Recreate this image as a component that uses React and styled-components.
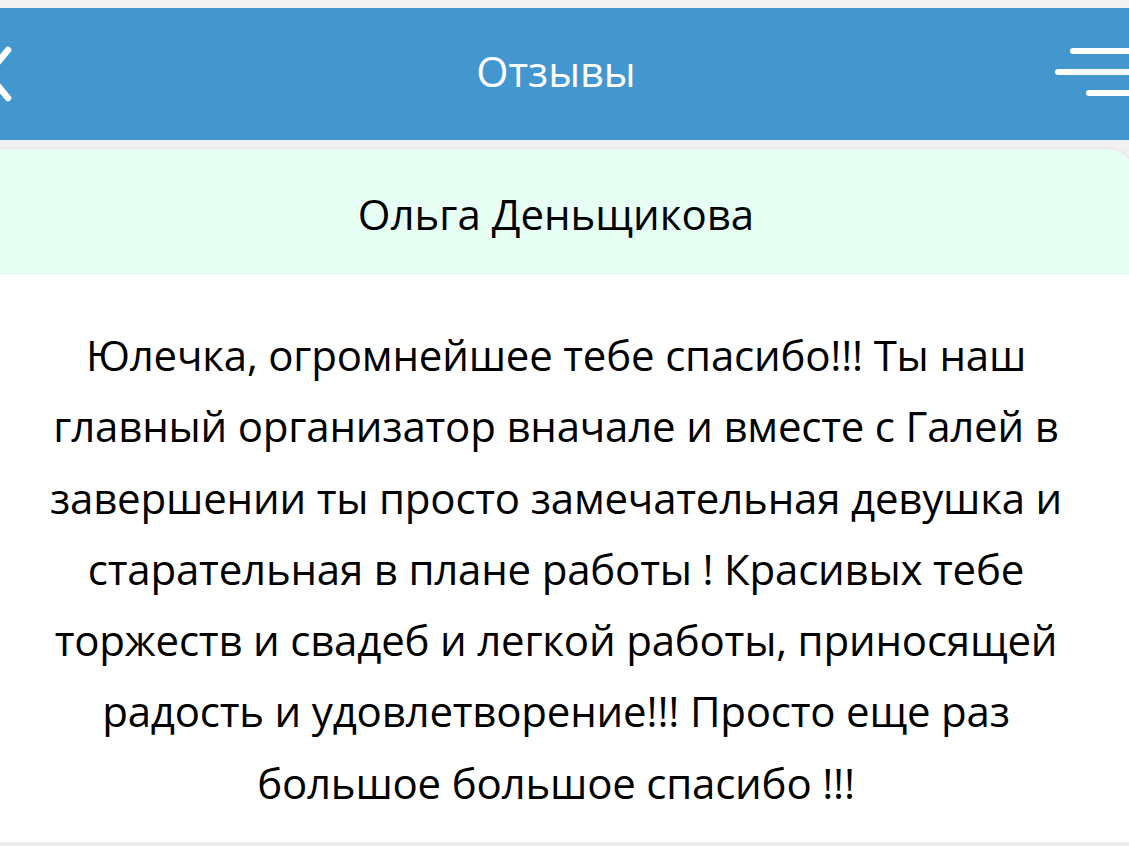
import React from 'react'
import styled, { createGlobalStyle } from 'styled-components'

const GlobalStyle = createGlobalStyle`
    html, body {
        margin: 0;
        padding: 0;
        background-color: #f2f2f2;
        overflow: hidden;
    }
    body {
        font-family: "Open Sans", "Noto Sans", "DejaVu Sans", sans-serif;
        color: #000;
    }
`

// the phone screen is a bit wider than the crop: it runs past both edges
const Page = styled.div`
    width: 1158px;
    height: 846px;
    margin-left: -23px;
    padding-top: 8px;
    box-sizing: border-box;
    display: flex;
    flex-direction: column;
`

const Header = styled.header`
    height: 132px;
    flex-shrink: 0;
    background-color: #4496cf;
    display: grid;
    grid-template-columns: 1fr auto 1fr;
    align-items: center;
    color: #fff;
`

const Title = styled.h1`
    margin: 0;
    font-weight: 400;
    font-size: 41.5px;
    text-align: center;
    padding-bottom: 6px;
`

const IconBtn = styled.button`
    background: none;
    border: none;
    padding: 0;
    display: flex;
    align-items: center;
    justify-self: ${props => props.$end ? 'end' : 'start'};
    margin-left: ${props => props.$left || 0}px;
    margin-right: ${props => props.$right || 0}px;
    margin-top: ${props => props.$top || 0}px;
`

const Card = styled.article`
    margin-top: 9px;
    flex: 1;
    background-color: #fff;
    border-radius: 28px 28px 0 0;
    overflow: hidden;
    box-shadow: 0 -1px 4px rgba(0, 0, 0, 0.06);
    display: flex;
    flex-direction: column;
    border-bottom: 4px solid #ebebeb;
`

const CardHead = styled.div`
    height: 126px;
    background-color: #e6fef3;
    display: flex;
    align-items: center;
    justify-content: center;
    font-size: 42px;
    padding-top: 2px;
    box-sizing: border-box;
`

const Review = styled.p`
    margin: 0;
    padding: 44px 20px 0;
    text-align: center;
    font-size: 42px;
    line-height: 71.3px;
    letter-spacing: -0.2px;
`

const lines = [
    'Юлечка, огромнейшее тебе спасибо!!! Ты наш',
    'главный организатор вначале и вместе с Галей в',
    'завершении ты просто замечательная девушка и',
    'старательная в плане работы ! Красивых тебе',
    'торжеств и свадеб и легкой работы, приносящей',
    'радость и удовлетворение!!! Просто еще раз',
    'большое большое спасибо !!!',
]

function App() {
    return (
        <>
            <GlobalStyle />
            <Page>
                <Header>
                    <IconBtn $left={7} aria-label="Назад">
                        <svg width="30" height="56" viewBox="0 0 30 56">
                            <polyline points="24,4 4,28 24,52" fill="none" stroke="#fff" strokeWidth="6.5" strokeLinecap="round" strokeLinejoin="round" />
                        </svg>
                    </IconBtn>
                    <Title>Отзывы</Title>
                    <IconBtn $end $right={-6} $top={-4} aria-label="Меню">
                        <svg width="86" height="52" viewBox="0 0 86 52">
                            <g stroke="#fff" strokeWidth="6" strokeLinecap="round">
                                <line x1="18" y1="5" x2="84" y2="5" />
                                <line x1="3" y1="26" x2="84" y2="26" />
                                <line x1="34" y1="47" x2="84" y2="47" />
                            </g>
                        </svg>
                    </IconBtn>
                </Header>
                <Card>
                    <CardHead>Ольга Деньщикова</CardHead>
                    <Review>
                        {lines.map((l, i) => (
                            <React.Fragment key={i}>
                                {l}
                                {i < lines.length - 1 && <br />}
                            </React.Fragment>
                        ))}
                    </Review>
                </Card>
            </Page>
        </>
    )
}

export default App
